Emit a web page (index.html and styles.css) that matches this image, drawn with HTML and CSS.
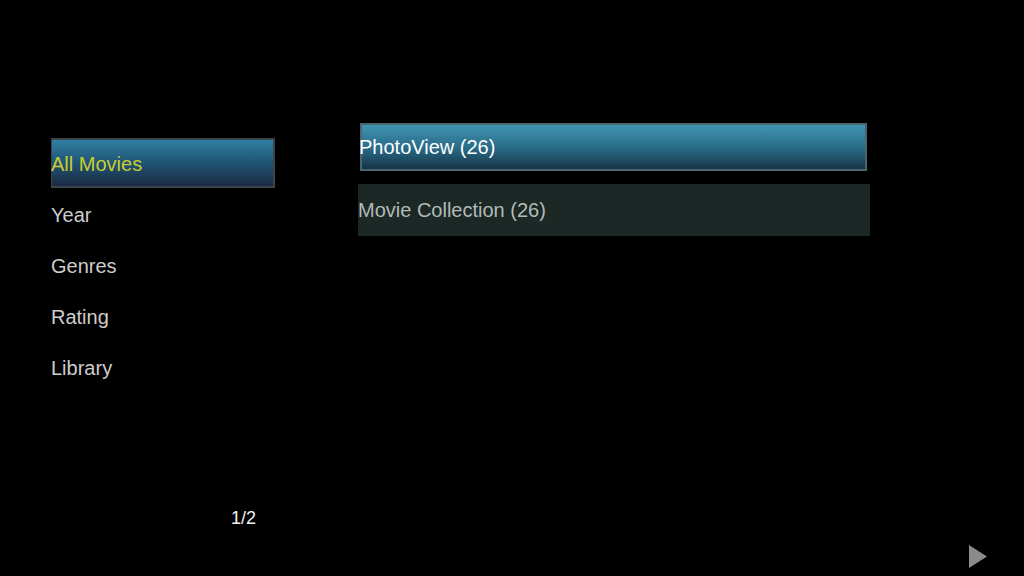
FILE: index.html
```html
<!DOCTYPE html>
<html lang="en">
<head>
    <meta charset="UTF-8">
    <title>Movies</title>
    <link rel="stylesheet" href="styles.css">
</head>
<body>
    <div class="screen">
        <!-- Categories -->
        <div class="sidebar">
            <ul class="menu">
                <li class="menu-item selected">All Movies</li>
                <li class="menu-item">Year</li>
                <li class="menu-item">Genres</li>
                <li class="menu-item">Rating</li>
                <li class="menu-item">Library</li>
            </ul>
            <div class="pager">1/2</div>
        </div>

        <!-- Collections -->
        <div class="content">
            <div class="row focused">PhotoView (26)</div>
            <div class="row">Movie Collection (26)</div>
        </div>
    </div>

    <div class="next-arrow">
        <svg width="18" height="23" viewBox="0 0 18 23"><polygon points="0,0 18,11.5 0,23" fill="#8a8a8a"/></svg>
    </div>
</body>
</html>
```

FILE: styles.css
```css
html, body {
    margin: 0;
    padding: 0;
    background: #000;
    width: 1024px;
    height: 576px;
    overflow: hidden;
}

body {
    font-family: 'Liberation Sans', Arial, sans-serif;
    color: #d0d0d0;
    position: relative;
}

.screen {
    display: flex;
    height: 576px;
}

/* Categories */
.sidebar {
    width: 224px;
    margin-left: 51px;
    padding-top: 138px;
    height: 390px;
    display: flex;
    flex-direction: column;
}

.menu {
    list-style: none;
    margin: 0;
    padding: 0;
}

.menu-item {
    height: 51px;
    line-height: 53px;
    font-size: 20px;
    color: #cdcdcd;
    box-sizing: border-box;
}

.menu-item.selected {
    height: 50px;
    line-height: 48px;
    margin-bottom: 1px;
    border: 2px solid #3c444c;
    border-left-width: 1px;
    background: linear-gradient(to bottom, #2f7fa2, #1f5474 50%, #1c2a42);
    color: #c9cc2e;
    text-indent: -1px;
}

.pager {
    margin-top: auto;
    text-align: right;
    padding-right: 19px;
    font-size: 18px;
    color: #f0f0f0;
    line-height: 20px;
}

/* Collections */
.content {
    margin-left: 83px;
    padding-top: 123px;
    display: flex;
    flex-direction: column;
    gap: 13px;
}

.row {
    width: 512px;
    height: 52px;
    line-height: 53px;
    font-size: 20px;
    background: #1b2826;
    color: #b2bab6;
    box-sizing: border-box;
}

.row.focused {
    width: 507px;
    height: 48px;
    line-height: 45px;
    margin-left: 2px;
    border: 2px solid #4a6470;
    background: linear-gradient(to bottom, #3f93b2, #2a6d8a 50%, #153447);
    color: #ffffff;
    text-indent: -3px;
}

.next-arrow {
    position: absolute;
    left: 969px;
    top: 545px;
    width: 18px;
    height: 23px;
}

.next-arrow svg {
    display: block;
}
```
